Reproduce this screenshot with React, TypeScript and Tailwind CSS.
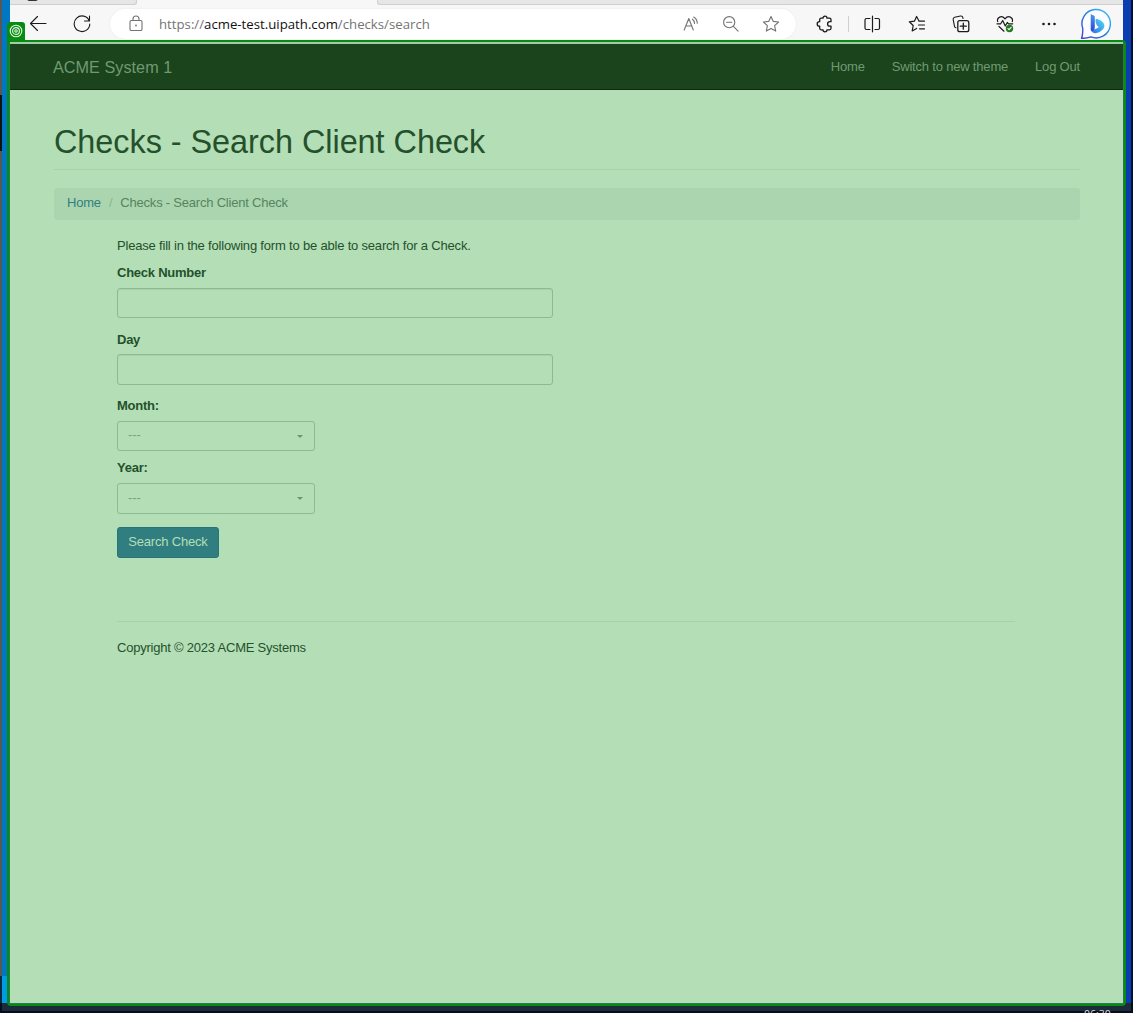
import type { ReactNode } from "react";

function Icon({ children, className = "" }: { children: ReactNode; className?: string }) {
  return (
    <svg viewBox="0 0 18 18" fill="none" stroke="currentColor" strokeWidth="1.1" strokeLinecap="round" strokeLinejoin="round" className={`h-[18px] w-[18px] shrink-0 ${className}`}>
      {children}
    </svg>
  );
}

function Toolbar() {
  return (
    <header className="h-10 overflow-hidden bg-[#f7f7f7]">
      <div className="flex h-[5px] justify-between">
        <div className="relative w-[127px] rounded-br-[3px] border-r border-b border-[#cfcfcf] bg-[#e6e6e6]">
          <span className="absolute -top-1 left-[17px] h-[5px] w-[11px] rounded-full bg-[#333]" />
        </div>
        <div className="w-[746px] rounded-bl-[3px] border-b border-l border-[#cfcfcf] bg-[#e6e6e6]" />
      </div>
      <div className="flex h-[35px] text-[#1b1b1b]">
        <Icon className="mt-[10px] ml-[19px]"><path d="M17 8.5H1.5M8.5 1.5 1.5 8.5l7 7" /></Icon>
        <Icon className="mt-[10px] ml-[26px]"><path d="M16.3 6A7.8 7.8 0 1 0 16.8 9M16.5 1v5h-5" /></Icon>
        <div className="mt-1 ml-[19px] flex h-[30px] w-[686px] rounded-full bg-white text-[#737373] shadow-[0_0_2px_#e3e3e3]">
          <Icon className="mt-[6px] ml-[17px]">
            <rect x="3" y="5.5" width="12" height="10" rx="1.3" />
            <path d="M6 5.5V4a3 3 0 0 1 6 0v1.5" /><circle cx="9" cy="10.5" r=".9" fill="currentColor" stroke="none" />
          </Icon>
          <div className="mt-[6px] ml-[14px] w-[524px] shrink-0 whitespace-nowrap font-['Open_Sans',sans-serif] text-[13.2px] leading-[18px] tracking-[0.01px]">
            https://<span className="text-[#111]">acme-test.uipath.com</span>/checks/search
          </div>
          <Icon className="mt-[6px]">
            <path d="m1.2 15 4.6-11.5L10.3 15M2.8 11h6M9.5 4.2a5 5 0 0 1 2 4.2M10.7 2a7.5 7.5 0 0 1 3.6 6.2" />
          </Icon>
          <Icon className="mt-[6px] ml-[21px]"><circle cx="7.2" cy="7.2" r="5.6" /><path d="m11.4 11.4 4.7 4.7M4.6 7.2h5.2" /></Icon>
          <Icon className="mt-[6px] ml-[22px]"><path d="m9 1.4 2.3 5 5.3.6-4 3.6 1.1 5.5L9 13.4l-4.7 2.7 1.1-5.5-4-3.6 5.3-.6z" /></Icon>
        </div>
        <Icon className="mt-[10px] ml-[20px]">
          <path strokeWidth="1.3" d="M5 3.2h2a2 2 0 0 1 4 0h2.5q1.5 0 1.5 1.5v2h-1.2a2.2 2.2 0 0 0 0 4.4H15v2.2q0 1.5-1.5 1.5H11a2 2 0 0 1-4 0H5q-1.3 0-1.3-1.5v-2.2H3.4a2.2 2.2 0 0 1 0-4.4h.3v-2q0-1.5 1.3-1.5z" />
        </Icon>
        <span className="mt-[11px] ml-[14px] h-4 w-px bg-[#d0d0d0]" />
        <Icon className="mt-[10px] ml-[14px]"><path strokeWidth="1.2" d="M7 3.5H3.5A1.5 1.5 0 0 0 2 5v8a1.5 1.5 0 0 0 1.5 1.5H7M12 3.5h3A1.5 1.5 0 0 1 16.5 5v8a1.5 1.5 0 0 1-1.5 1.5h-3M9.5 1.2v15.6" /></Icon>
        <Icon className="mt-[10px] ml-[27px]"><path strokeWidth="1.2" d="M11 6 8.6 1.5 6.4 6.2l-5.1.6 3.9 3.7-1 5.4 4.4-2.5M11 6.2h5.5M10.5 10h6M11.5 13.8h5" /></Icon>
        <Icon className="mt-[10px] ml-[26px]">
          <path d="M4 12.7A2 2 0 0 1 2.5 11.3L1.2 4.7A2 2 0 0 1 2.7 2.3L8.5 1a2 2 0 0 1 2.3 1.5l.2 1" />
          <rect x="5.8" y="5.7" width="11" height="11" rx="2" strokeWidth="1.3" /><path strokeWidth="1.3" d="M11.3 8.2v6M8.3 11.2h6" />
        </Icon>
        <Icon className="mt-[10px] ml-[26px]">
          <path strokeWidth="1.2" d="M1.7 6.7C.5 2.3 5.7-.2 9 3.8c3.3-4 8.5-1.5 7.3 2.9M1 8.8h3.7l2-3.3L9.3 11l2-3.5 1.2 1.3h4.2M3 11.5l5 4.7" />
          <circle cx="13.5" cy="13.5" r="3.7" fill="#267a24" stroke="none" /><path d="m12 13.7 1.1 1 2.1-2.3" stroke="white" />
        </Icon>
        <Icon className="mt-[10px] ml-[26px]">
          <g fill="currentColor" stroke="none"><circle cx="3.5" cy="9" r="1.3" /><circle cx="9" cy="9" r="1.3" /><circle cx="14.5" cy="9" r="1.3" /></g>
        </Icon>
        <svg viewBox="0 0 32 32" className="mt-[3px] ml-[22px] h-8 w-8 shrink-0">
          <defs>
            <linearGradient id="ring" x1="0" y1="1" x2="1" y2="0"><stop stopColor="#4540d0" /><stop offset=".5" stopColor="#287de4" /><stop offset="1" stopColor="#43c4f0" /></linearGradient>
            <linearGradient id="stem" x1="0" y1="0" x2="0" y2="1"><stop stopColor="#4c9bea" /><stop offset="1" stopColor="#2c43db" /></linearGradient>
            <linearGradient id="bowl" x1="0" y1="1" x2="1" y2="0"><stop stopColor="#2870ed" /><stop offset="1" stopColor="#55dcec" /></linearGradient>
          </defs>
          <path d="M1.5 30.2Q2.8 27.5 2.8 20.5A14.2 14.2 0 1 1 11 28.9Q6 30.6 1.5 30.2z" fill="#fbfdff" stroke="url(#ring)" strokeWidth="1.4" strokeLinejoin="round" />
          <path d="M15.5 12c0-1.5 2-1.2 5.2.6 4.1 2.6 4.9 6.1 2 9-3 3.2-7.1 4.4-9.8 3-1.2-.7-1.9-1.9-2-3.3 3 .8 5.8-.2 8-2.2-2.2-1.2-3.4-3.9-3.4-7.1z" fill="url(#bowl)" />
          <path d="M10.7 6.1 13.3 7.2c1 .4 1.5 1 1.5 2v10.4c0 3-4.1 5-4.1 1.7z" fill="url(#stem)" />
        </svg>
      </div>
    </header>
  );
}

function Select({ className }: { className: string }) {
  return (
    <button className={`flex w-[198px] items-center justify-between rounded-[3px] border border-[#8eb994] pr-[11px] pl-[10px] text-[#77a47d] ${className}`}>
      <span className="mb-[2px] leading-4 tracking-[-0.05px]">---</span>
      <span className="h-0 w-0 border-x-[3px] border-t-[3px] border-x-transparent border-t-[#6a956e]" />
    </button>
  );
}

function Page() {
  return (
    <main className="h-[963px] bg-[#b4deb6] pt-1 font-['Liberation_Sans',Arial,sans-serif] text-[13px] tracking-[-0.19px] text-[#24512b]">
      <nav className="flex h-[46px] justify-between border-b border-[#0d2a10] bg-[#1b431c] pr-[43px] pl-[43px] text-[#6f9b72]">
        <a className="mt-[14px] text-[16.2px] leading-[18px] tracking-[0.04px]">ACME System 1</a>
        <div className="mt-[14px] flex gap-[27px] leading-[18px]">
          <a>Home</a><a>Switch to new theme</a><a>Log Out</a>
        </div>
      </nav>
      <div className="pr-[43px] pl-11">
        <h1 className="h-20 border-b border-[#a8d1aa] pt-[33px] text-[32.4px] leading-[38px] tracking-[-0.03px]">Checks - Search Client Check</h1>
        <div className="mt-[18px] flex h-8 rounded-[3px] bg-[#abd5ae] pt-[6px] pl-[13px] leading-[18px] tracking-[-0.21px]">
          <a className="text-[#317f83]">Home</a>
          <span className="w-[19.5px] text-center text-[#8ab78e]">/</span>
          <span className="text-[#568460]">Checks - Search Client Check</span>
        </div>
        <div className="flex flex-col pr-[65px] pl-[63px]">
          <p className="mt-[17px] leading-[18px]">Please fill in the following form to be able to search for a Check.</p>
          <label className="mt-[9px] font-bold leading-[18px] tracking-[-0.25px]">Check Number</label>
          <input className="mt-[6px] h-[30px] w-[436px] rounded-[3px] border border-[#8eb994] shadow-[inset_0_1px_1px_#a8d1aa]" />
          <label className="mt-[13px] font-bold leading-[18px] tracking-[-0.25px]">Day</label>
          <input className="mt-[5px] h-[31px] w-[436px] rounded-[3px] border border-[#8eb994] shadow-[inset_0_1px_1px_#a8d1aa]" />
          <label className="mt-3 font-bold leading-[18px] tracking-[-0.25px]">Month:</label>
          <Select className="mt-[6px] h-[30px]" />
          <label className="mt-2 font-bold leading-[18px] tracking-[-0.25px]">Year:</label>
          <Select className="mt-[6px] h-[31px]" />
          <button className="mt-[13px] h-[31px] w-[102px] rounded-[3px] border border-[#29737a] bg-[#307e80] pb-[2px] text-[#b4deb6]">Search Check</button>
          <footer className="mt-[63px] border-t border-[#a8d1aa] pt-[17px] leading-[18px] tracking-[-0.22px]">Copyright © 2023 ACME Systems</footer>
        </div>
      </div>
    </main>
  );
}

export default function App() {
  return (
    <div className="relative h-[1013px] w-[1133px] overflow-hidden bg-[#080c18]">
      <div className="flex h-[1003px]">
        <div className="flex w-[2px] flex-col bg-[#595656]"><div className="mt-[95px] h-[56px] bg-[#111]" /><div className="mt-[825px] flex-1 bg-[#082a3c]" /></div>
        <div className="flex w-2 flex-col bg-[#0077c3]"><div className="mt-[976px] flex-1 bg-[#009be8]" /></div>
        <div className="w-[1113px]"><Toolbar /><Page /></div>
        <div className="w-2 bg-[#0a3db0]" />
        <div className="w-[2px] bg-[#061033]" />
      </div>
      <div className="ml-[2px] h-2 w-[1129px] bg-[#1b2b3c]" />
      <div className="-mt-[2px] h-1 pl-[1084px] font-['Open_Sans',sans-serif] text-[10.5px] leading-[11px] text-[#ddd]">06:30</div>
      <div className="pointer-events-none absolute top-10 left-[7px] h-[966px] w-[1119px] rounded-[4px] rounded-tl-none border-2 border-[#078b10]">
        <div className="h-full border-x border-b border-[#277c55]" />
      </div>
      <div className="absolute top-[42px] left-[10px] h-[2px] w-[1113px] bg-[#a3cca6]" />
      <div className="absolute top-[22px] left-[7px] flex h-[19px] w-[18px] items-center justify-center rounded-t-[3px] bg-[#078b10] pb-px text-[#e4fae4]">
        <svg viewBox="0 0 14 14" fill="none" stroke="currentColor" strokeWidth="1.1" className="h-[14px] w-[14px]"><circle cx="7" cy="7" r="5.8" /><circle cx="7" cy="7" r="3.4" /><circle cx="7" cy="7" r="1.2" /></svg>
      </div>
    </div>
  );
}
